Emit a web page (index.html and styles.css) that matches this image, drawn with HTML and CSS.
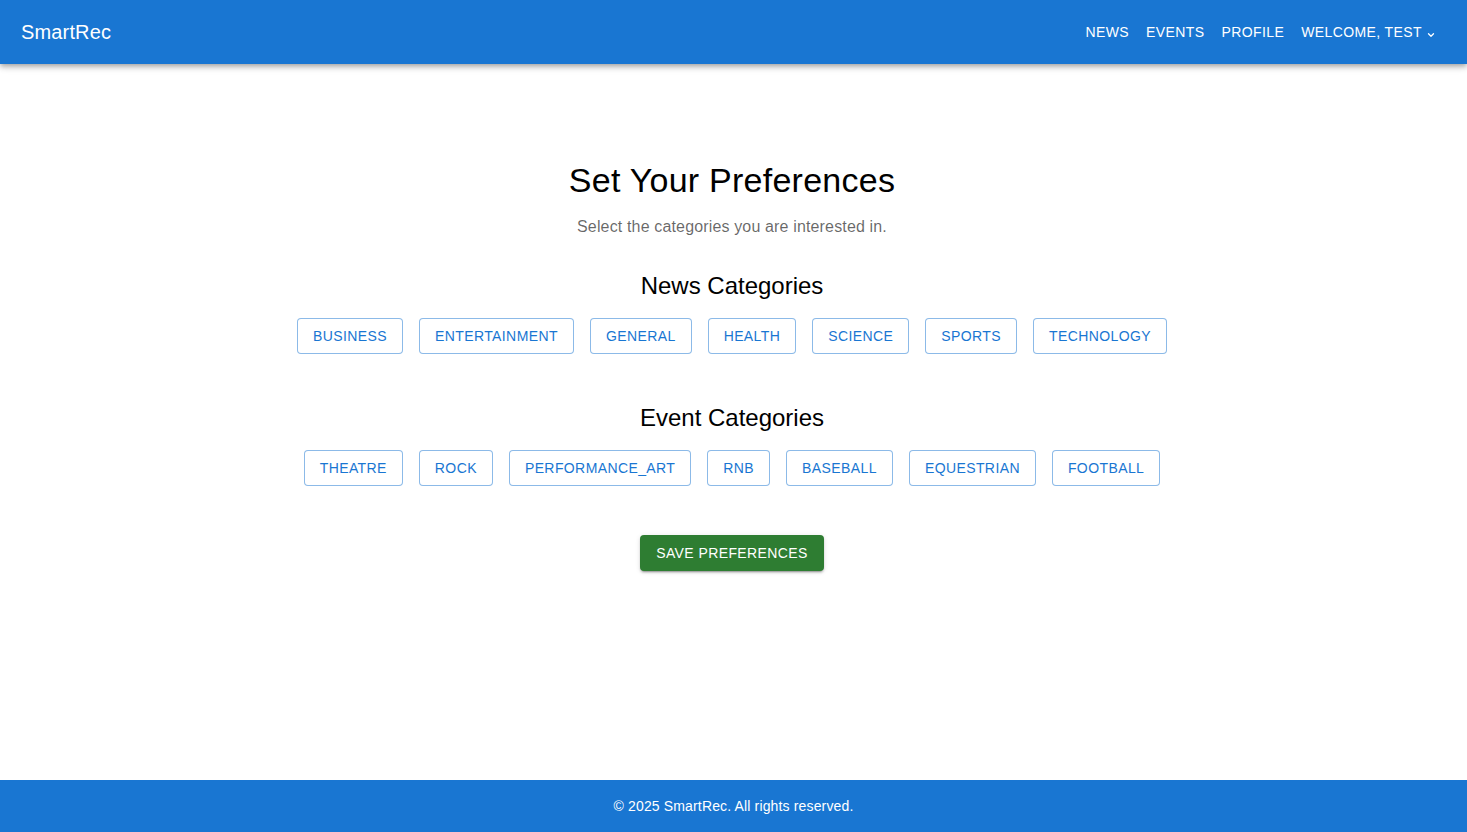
FILE: index.html
```html
<!DOCTYPE html>
<html lang="en">
<head>
<meta charset="utf-8">
<title>SmartRec</title>
<link rel="stylesheet" href="styles.css">
</head>
<body>
<div class="app">
  <header class="appbar">
    <div class="brand">SmartRec</div>
    <nav class="nav">
      <a class="nav-btn">NEWS</a>
      <a class="nav-btn">EVENTS</a>
      <a class="nav-btn">PROFILE</a>
      <a class="nav-btn user">WELCOME, TEST
        <svg class="chev" width="8" height="6" viewBox="0 0 8 6"><path d="M1.5 1.8 L4 4.3 L6.5 1.8" fill="none" stroke="#fff" stroke-width="1.3" stroke-linecap="round" stroke-linejoin="round"/></svg>
      </a>
    </nav>
  </header>

  <main class="main">
    <h1 class="title">Set Your Preferences</h1>
    <p class="subtitle">Select the categories you are interested in.</p>

    <section class="section">
      <h2 class="section-title">News Categories</h2>
      <div class="chips">
        <button class="chip">BUSINESS</button>
        <button class="chip">ENTERTAINMENT</button>
        <button class="chip">GENERAL</button>
        <button class="chip">HEALTH</button>
        <button class="chip">SCIENCE</button>
        <button class="chip">SPORTS</button>
        <button class="chip">TECHNOLOGY</button>
      </div>
    </section>

    <section class="section">
      <h2 class="section-title">Event Categories</h2>
      <div class="chips">
        <button class="chip">THEATRE</button>
        <button class="chip">ROCK</button>
        <button class="chip">PERFORMANCE_ART</button>
        <button class="chip">RNB</button>
        <button class="chip">BASEBALL</button>
        <button class="chip">EQUESTRIAN</button>
        <button class="chip">FOOTBALL</button>
      </div>
    </section>

    <button class="save">SAVE PREFERENCES</button>
  </main>

  <footer class="footer">© 2025 SmartRec. All rights reserved.</footer>
</div>
</body>
</html>
```

FILE: styles.css
```css
* { box-sizing: border-box; }
html, body { margin: 0; padding: 0; }
body {
  font-family: "Liberation Sans", Arial, Helvetica, sans-serif;
  background: #fff;
  color: rgba(0,0,0,0.87);
}
.app {
  min-height: 100vh;
  display: flex;
  flex-direction: column;
}
.appbar {
  height: 64px;
  background: #1976d2;
  color: #fff;
  display: flex;
  align-items: center;
  justify-content: space-between;
  padding: 0 24px 0 21px;
  box-shadow: 0 2px 4px -1px rgba(0,0,0,0.2), 0 4px 5px 0 rgba(0,0,0,0.14), 0 1px 10px 0 rgba(0,0,0,0.12);
  position: relative;
  z-index: 2;
}
.brand {
  font-size: 20px;
  line-height: 1.6;
  letter-spacing: 0.15px;
}
.nav {
  display: flex;
  align-items: center;
  gap: 1px;
}
.nav-btn {
  font-size: 14px;
  letter-spacing: 0.4px;
  line-height: 24px;
  padding: 6px 8px;
  color: #fff;
  display: flex;
  align-items: center;
}
.chev {
  margin-left: 5px;
  margin-top: 6px;
}
.main {
  flex: 1;
  display: flex;
  flex-direction: column;
  align-items: center;
  padding: 95px 3px 0 0;
}
.title {
  margin: 0 0 14px;
  font-size: 34px;
  font-weight: 400;
  line-height: 42px;
  letter-spacing: 0.25px;
  color: #000;
}
.subtitle {
  margin: 0 0 31px;
  font-size: 16px;
  line-height: 24px;
  letter-spacing: 0.15px;
  color: rgba(0,0,0,0.6);
}
.section {
  display: flex;
  flex-direction: column;
  align-items: center;
  margin-bottom: 48px;
}
.section-title {
  margin: 0 0 16px;
  font-size: 24px;
  font-weight: 400;
  line-height: 32px;
  color: #000;
}
.chips {
  display: flex;
  justify-content: center;
  gap: 16px;
}
.chip {
  font-family: inherit;
  font-size: 14px;
  letter-spacing: 0.4px;
  line-height: 24px;
  height: 36px;
  padding: 5px 15px;
  background: #fff;
  color: #1976d2;
  border: 1px solid rgba(25,118,210,0.5);
  border-radius: 4px;
  cursor: pointer;
}
.save {
  font-family: inherit;
  font-size: 14px;
  letter-spacing: 0.4px;
  line-height: 24px;
  height: 36px;
  padding: 6px 16px;
  margin-top: 1px;
  background: #2e7d32;
  color: #fff;
  border: 0;
  border-radius: 4px;
  box-shadow: 0 3px 1px -2px rgba(0,0,0,0.2), 0 2px 2px 0 rgba(0,0,0,0.14), 0 1px 5px 0 rgba(0,0,0,0.12);
  cursor: pointer;
}
.footer {
  height: 52px;
  background: #1976d2;
  color: #fff;
  display: flex;
  align-items: center;
  justify-content: center;
  font-size: 14px;
  letter-spacing: 0.15px;
}
```
